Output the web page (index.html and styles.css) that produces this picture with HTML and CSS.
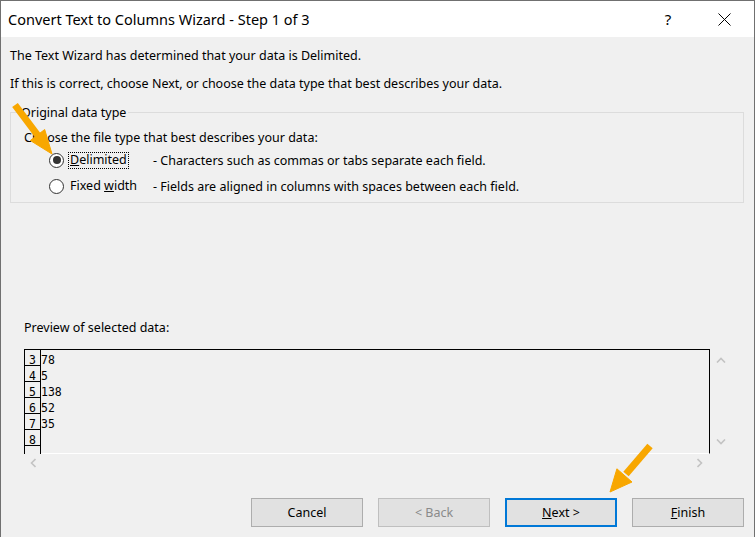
FILE: index.html
```html
<!DOCTYPE html>
<html lang="en">
<head>
<meta charset="utf-8">
<title>Convert Text to Columns Wizard - Step 1 of 3</title>
<link rel="stylesheet" href="styles.css">
</head>
<body>
<div class="window">
  <header class="titlebar">
    <span class="title">Convert Text to Columns Wizard - Step 1 of 3</span>
    <span class="help">?</span>
    <span class="close">
      <svg width="13" height="13" viewBox="0 0 13 13"><path d="M0.5 0.5 L12.5 12.5 M12.5 0.5 L0.5 12.5" stroke="#000" stroke-width="1" fill="none"/></svg>
    </span>
  </header>

  <main class="content">
    <p class="intro">The Text Wizard has determined that your data is Delimited.</p>
    <p class="intro second">If this is correct, choose Next, or choose the data type that best describes your data.</p>

    <fieldset class="group">
      <legend>Original data type</legend>
      <p class="prompt">Choose the file type that best describes your data:</p>
      <div class="option">
        <span class="radio checked"></span>
        <span class="label"><span class="focus"><u>D</u>elimited</span></span>
        <span class="desc">- Characters such as commas or tabs separate each field.</span>
      </div>
      <div class="option second-option">
        <span class="radio"></span>
        <span class="label"><span class="plain">Fixed <u>w</u>idth</span></span>
        <span class="desc">- Fields are aligned in columns with spaces between each field.</span>
      </div>
    </fieldset>

    <p class="preview-title">Preview of selected data:</p>
    <div class="preview-row">
      <div class="preview">
        <div class="nums">
          <div class="num">3</div>
          <div class="num">4</div>
          <div class="num">5</div>
          <div class="num">6</div>
          <div class="num">7</div>
          <div class="num">8</div>
          <div class="num"></div>
        </div>
        <div class="data">
          <div class="cell">78</div>
          <div class="cell">5</div>
          <div class="cell">138</div>
          <div class="cell">52</div>
          <div class="cell">35</div>
          <div class="cell"></div>
        </div>
      </div>
      <div class="vscroll">
        <svg width="10" height="6" viewBox="0 0 10 6"><polyline points="1,5.5 5,1.5 9,5.5" fill="none" stroke="#c3c3c3" stroke-width="1.6"/></svg>
        <svg width="10" height="6" viewBox="0 0 10 6"><polyline points="1,0.5 5,4.5 9,0.5" fill="none" stroke="#c3c3c3" stroke-width="1.6"/></svg>
      </div>
    </div>
    <div class="hscroll">
      <svg width="6" height="10" viewBox="0 0 6 10"><polyline points="5.5,1 1.5,5 5.5,9" fill="none" stroke="#c3c3c3" stroke-width="1.6"/></svg>
      <svg width="6" height="10" viewBox="0 0 6 10"><polyline points="0.5,1 4.5,5 0.5,9" fill="none" stroke="#c3c3c3" stroke-width="1.6"/></svg>
    </div>

    <div class="buttons">
      <button class="btn" type="button">Cancel</button>
      <button class="btn" type="button" disabled>&lt; Back</button>
      <button class="btn default" type="button"><u>N</u>ext &gt;</button>
      <button class="btn" type="button"><u>F</u>inish</button>
    </div>
  </main>

  <!-- pointer arrows drawn over the dialog -->
  <svg class="callouts" width="755" height="537" viewBox="0 0 755 537">
    <g fill="#f8a700" stroke="#f8a700">
      <line x1="15" y1="105" x2="39" y2="137" stroke-width="7"/>
      <polygon points="30.3,140.5 44.7,129.5 52,154" stroke-width="1"/>
      <line x1="650" y1="446" x2="626" y2="474" stroke-width="7"/>
      <polygon points="632,482 616.9,468.8 610,492" stroke-width="1"/>
    </g>
  </svg>
</div>
</body>
</html>
```

FILE: styles.css
```css
* {
  box-sizing: border-box;
}

html,
body {
  margin: 0;
  padding: 0;
}

body {
  width: 755px;
  height: 537px;
  overflow: hidden;
  background: #f0f0f0;
  font-family: "Noto Sans", "DejaVu Sans", sans-serif;
  font-size: 12.5px;
  color: #000;
}

.window {
  position: relative;
  width: 755px;
  height: 537px;
  border: 1px solid #707070;
  border-bottom: 0;
  background: #f0f0f0;
  display: flex;
  flex-direction: column;
}

/* title bar */
.titlebar {
  height: 36px;
  flex: none;
  background: #fff;
  display: flex;
  align-items: center;
  padding: 0 23px 0 7px;
}

.title {
  flex: 1;
  font-size: 14.5px;
  line-height: 18px;
}

.help {
  width: 20px;
  margin-right: 40px;
  text-align: center;
  font-size: 15px;
  line-height: 18px;
}

.close {
  display: flex;
  width: 13px;
  height: 13px;
}

/* dialog body */
.content {
  flex: 1;
  padding: 0 10px 0 9px;
}

.intro {
  margin: 11px 0 0;
  line-height: 16px;
}

.intro.second {
  margin-top: 12px;
}

.group {
  margin: 13px 0 0;
  padding: 10px 13px 6px;
  border: 1px solid #dcdcdc;
  min-width: 0;
}

.group legend {
  margin-left: -5px;
  padding: 0 2px;
  line-height: 15px;
}

.prompt {
  margin: 0;
  line-height: 16px;
}

.option {
  display: flex;
  align-items: center;
  height: 20px;
  margin-top: 4px;
}

.option.second-option {
  margin-top: 6px;
}

.radio {
  position: relative;
  flex: none;
  width: 15px;
  height: 15px;
  margin-left: 25px;
  border: 1px solid #333;
  border-radius: 50%;
  background: #fff;
}

.radio.checked::after {
  content: "";
  position: absolute;
  left: 2.5px;
  top: 2.5px;
  width: 8px;
  height: 8px;
  border-radius: 50%;
  background: #333;
}

.label {
  flex: none;
  width: 85px;
  margin-left: 4px;
}

.label .focus,
.label .plain {
  display: inline-block;
  padding: 0 1px 1px;
  line-height: 14px;
  border: 1px dotted transparent;
}

.label .focus {
  border-color: #000;
}

.desc {
  white-space: nowrap;
}

/* preview */
.preview-title {
  margin: 117px 0 0 14px;
  line-height: 16px;
}

.preview-row {
  display: flex;
  margin: 13px 0 0 14px;
}

.preview {
  display: flex;
  width: 686px;
  height: 105px;
  border-top: 1px solid #000;
  border-left: 1px solid #000;
  overflow: hidden;
  font-family: "DejaVu Sans Mono", monospace;
  font-size: 11.5px;
}

.nums {
  width: 16px;
  flex: none;
  height: 104px;
  border-right: 1px solid #000;
  overflow: hidden;
}

.num {
  height: 16px;
  border-bottom: 1px solid #000;
  text-align: center;
  line-height: 15px;
  padding-top: 3px;
  overflow: hidden;
}

.data {
  flex: 1;
  border-right: 1px solid #000;
  border-bottom: 1px solid #fff;
}

.cell {
  height: 16px;
  line-height: 15px;
  padding-top: 3px;
  overflow: hidden;
}

.vscroll {
  width: 21px;
  height: 105px;
  display: flex;
  flex-direction: column;
  justify-content: space-between;
  align-items: center;
  padding: 8px 0 9px;
}

.vscroll svg,
.hscroll svg {
  display: block;
}

.hscroll {
  display: flex;
  justify-content: space-between;
  align-items: center;
  width: 686px;
  height: 18px;
  margin-left: 14px;
  padding: 0 7px 0 6px;
}

/* command buttons */
.buttons {
  display: flex;
  justify-content: flex-end;
  gap: 15px;
  margin-top: 26px;
}

.btn {
  width: 112px;
  height: 29px;
  padding: 0;
  border: 1px solid #adadad;
  background: #e1e1e1;
  font-family: inherit;
  font-size: 12.5px;
  color: #000;
}

.btn:disabled {
  color: #8a8a8a;
  border-color: #bfbfbf;
}

.btn.default {
  border: 2px solid #0078d7;
}

.callouts {
  position: absolute;
  left: -1px;
  top: -1px;
  pointer-events: none;
}
```
